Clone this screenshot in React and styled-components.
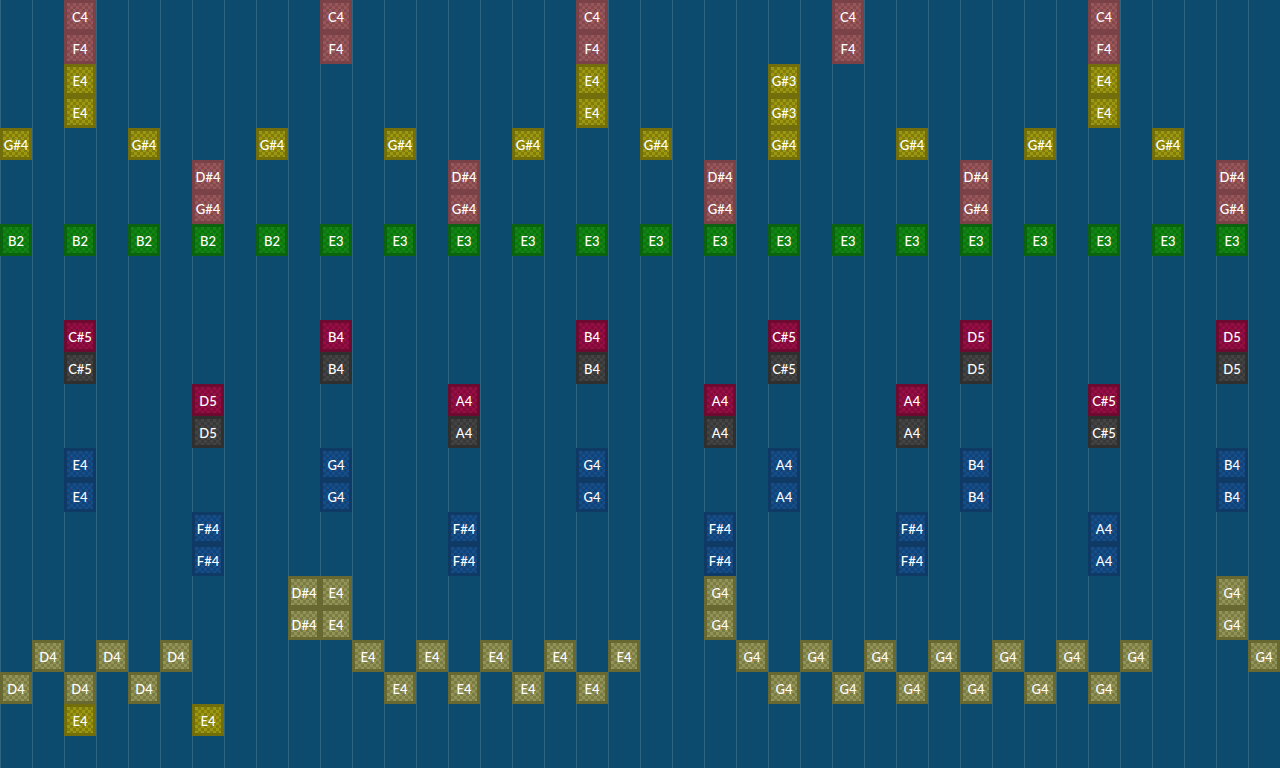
import React from 'react';
import styled, { createGlobalStyle } from 'styled-components';

const GlobalStyle = createGlobalStyle`
  html, body {
    margin: 0;
    padding: 0;
    height: 100%;
    background: #0d4b6e;
    overflow: hidden;
  }
`;

const tones = {
  rose: { edge: '#7a4246', a: '#99575c', b: '#84494d' },
  olive: { edge: '#736e0c', a: '#9c9812', b: '#827d0b' },
  green: { edge: '#0b620f', a: '#118613', b: '#0d740f' },
  crimson: { edge: '#6c0a2f', a: '#960e44', b: '#800b3a' },
  gray: { edge: '#2f2f2f', a: '#444444', b: '#383838' },
  blue: { edge: '#0f3a66', a: '#164e8a', b: '#114278' },
  khaki: { edge: '#686832', a: '#939358', b: '#7b7b44' },
};

const Board = styled.div`
  display: grid;
  grid-template-columns: repeat(40, 32px);
  grid-template-rows: repeat(24, 32px);
  width: 1280px;
  height: 768px;
  background-color: #0d4b6e;
  background-image: linear-gradient(90deg, #2f6582 1px, transparent 1px);
  background-size: 32px 32px;
`;

const Note = styled.div`
  grid-column: ${(p) => p.$col + 1};
  grid-row: ${(p) => p.$row + 1};
  display: flex;
  align-items: center;
  justify-content: center;
  box-sizing: border-box;
  padding-top: 2px;
  border: 3px solid ${(p) => tones[p.$tone].edge};
  background-color: ${(p) => tones[p.$tone].a};
  background-image: conic-gradient(
    ${(p) => tones[p.$tone].b} 25%,
    transparent 0 50%,
    ${(p) => tones[p.$tone].b} 0 75%,
    transparent 0
  );
  background-size: 6px 6px;
  font-family: 'Lato', sans-serif;
  font-size: 13px;
  font-weight: 500;
  color: #ffffff;
  white-space: nowrap;
  -webkit-font-smoothing: antialiased;
`;

const evens = (from, to) => {
  const out = [];
  for (let c = from; c <= to; c += 2) out.push(c);
  return out;
};

// [row, tone, [[label, columns], ...]]
const tracks = [
  [0, 'rose', [['C4', [2, 10, 18, 26, 34]]]],
  [1, 'rose', [['F4', [2, 10, 18, 26, 34]]]],
  [2, 'olive', [['E4', [2, 18, 34]], ['G#3', [24]]]],
  [3, 'olive', [['E4', [2, 18, 34]], ['G#3', [24]]]],
  [4, 'olive', [['G#4', [0, 4, 8, 12, 16, 20, 24, 28, 32, 36]]]],
  [5, 'rose', [['D#4', [6, 14, 22, 30, 38]]]],
  [6, 'rose', [['G#4', [6, 14, 22, 30, 38]]]],
  [7, 'green', [['B2', evens(0, 8)], ['E3', evens(10, 38)]]],
  [10, 'crimson', [['C#5', [2, 24]], ['B4', [10, 18]], ['D5', [30, 38]]]],
  [11, 'gray', [['C#5', [2, 24]], ['B4', [10, 18]], ['D5', [30, 38]]]],
  [12, 'crimson', [['D5', [6]], ['A4', [14, 22, 28]], ['C#5', [34]]]],
  [13, 'gray', [['D5', [6]], ['A4', [14, 22, 28]], ['C#5', [34]]]],
  [14, 'blue', [['E4', [2]], ['G4', [10, 18]], ['A4', [24]], ['B4', [30, 38]]]],
  [15, 'blue', [['E4', [2]], ['G4', [10, 18]], ['A4', [24]], ['B4', [30, 38]]]],
  [16, 'blue', [['F#4', [6, 14, 22, 28]], ['A4', [34]]]],
  [17, 'blue', [['F#4', [6, 14, 22, 28]], ['A4', [34]]]],
  [18, 'khaki', [['D#4', [9]], ['E4', [10]], ['G4', [22, 38]]]],
  [19, 'khaki', [['D#4', [9]], ['E4', [10]], ['G4', [22, 38]]]],
  [20, 'khaki', [['D4', [1, 3, 5]], ['E4', [11, 13, 15, 17, 19]], ['G4', [23, 25, 27, 29, 31, 33, 35, 39]]]],
  [21, 'khaki', [['D4', [0, 2, 4]], ['E4', [12, 14, 16, 18]], ['G4', [24, 26, 28, 30, 32, 34]]]],
  [22, 'olive', [['E4', [2, 6]]]],
];

export default function App() {
  return (
    <>
      <GlobalStyle />
      <Board>
        {tracks.flatMap(([row, tone, groups]) =>
          groups.flatMap(([label, cols]) =>
            cols.map((col) => (
              <Note key={`${row}-${col}`} $row={row} $col={col} $tone={tone}>
                {label}
              </Note>
            ))
          )
        )}
      </Board>
    </>
  );
}
